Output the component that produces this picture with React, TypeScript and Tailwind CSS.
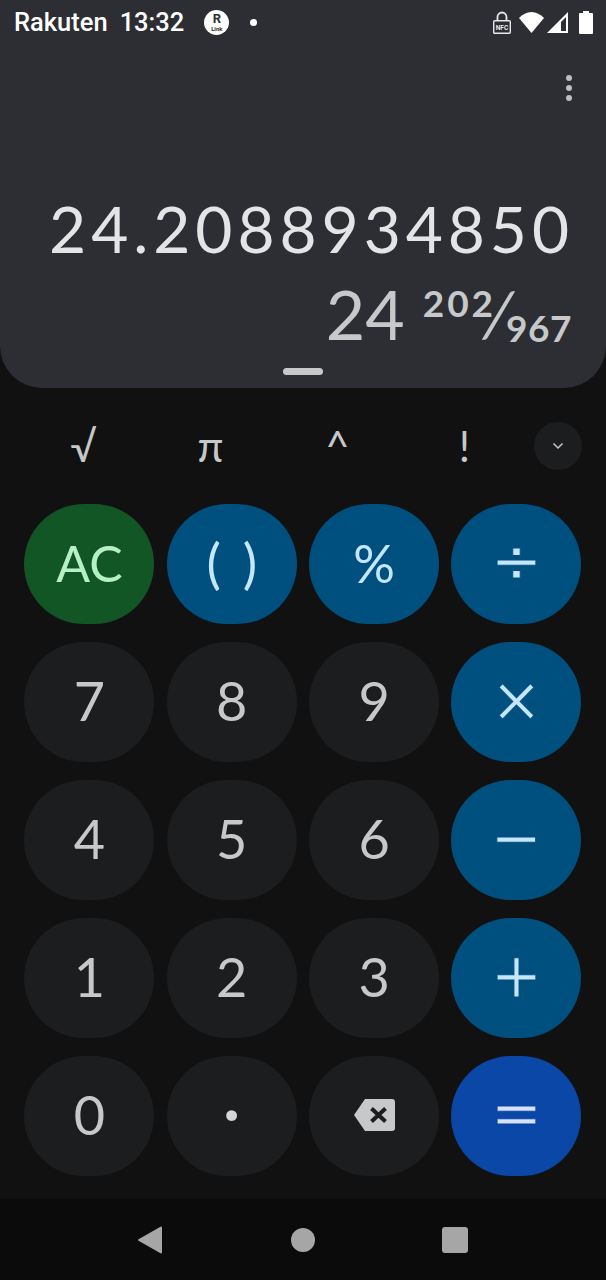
import type { ReactNode } from "react";

const SCI_KEYS = ["√", "π", "^", "!"];

const NUM = "bg-[#1c1d1f] pb-[2px] text-[#c6c8c9] text-[54px]";
const BLUE = "bg-[#00507f] text-[#c4e7ff]";
const OP = `${BLUE} pb-[4px] font-['DejaVu_Sans',sans-serif] text-[62px] [-webkit-text-stroke:1px_#00507f]`;

function Key({ className, children }: { className: string; children: ReactNode }) {
  return (
    <div className={`flex h-[120px] items-center justify-center rounded-full leading-none ${className}`}>
      {children}
    </div>
  );
}

function StatusIcons() {
  return (
    <div className="flex items-center">
      <svg width="18" height="23" viewBox="0 0 18 23" className="mr-[8px]">
        <path d="M4.500 10V6a4.500 4.500 0 0 1 9 0v4" fill="none" stroke="#e8e8e8" strokeWidth="1.800" />
        <rect x="0.700" y="9.700" width="16.600" height="12.600" rx="1" fill="#2d2e33" stroke="#e8e8e8" strokeWidth="1.400" />
        <text x="9" y="18.500" textAnchor="middle" fontSize="6.500" fontWeight="700" fill="#e8e8e8" fontFamily="Roboto">NFC</text>
      </svg>
      <svg width="25" height="21" viewBox="0 0 25 21" className="mr-[3px]">
        <path d="M0 6C3.500 2.500 7.800 0 12.500 0S21.500 2.500 25 6L12.500 21z" fill="#fff" />
      </svg>
      <svg width="21" height="21" viewBox="0 0 21 21" className="mr-[11px]">
        <path d="M21 0v21H0z" fill="#fff" />
        <path d="M19 5v14h-5V10z" fill="#2d2e33" />
      </svg>
      <svg width="14" height="23" viewBox="0 0 14 23">
        <path d="M4 0h6v2h3a1 1 0 0 1 1 1v19a1 1 0 0 1-1 1H1a1 1 0 0 1-1-1V3a1 1 0 0 1 1-1h3z" fill="#fff" />
      </svg>
    </div>
  );
}

export default function App() {
  return (
    <div className="flex h-[1280px] w-[606px] flex-col overflow-hidden bg-[#111112] font-['Lato',sans-serif]">
      <div className="flex h-[388px] flex-none flex-col rounded-b-[42px] bg-[#2d2e33]">
        <div className="flex h-[44px] flex-none items-center justify-between pr-[13px] pl-[14px] font-['Roboto',sans-serif] text-[25.500px] font-medium text-white">
          <div className="flex items-center">
            <span>Rakuten</span>
            <span className="ml-[12px]">13:32</span>
            <div className="ml-[20px] flex h-[25px] w-[25px] flex-col items-center justify-center rounded-full bg-white text-[#2d2e33]">
              <span className="text-[13px] leading-[12px] font-bold">R</span>
              <span className="text-[6px] leading-[7px] font-bold">Link</span>
            </div>
            <div className="ml-[21px] h-[7px] w-[7px] rounded-full bg-white" />
          </div>
          <StatusIcons />
        </div>

        <div className="mt-[31px] mr-[34px] flex flex-none flex-col items-end gap-[4px] self-end">
          <div className="h-[6px] w-[6px] rounded-full bg-[#bdbec0]" />
          <div className="h-[6px] w-[6px] rounded-full bg-[#bdbec0]" />
          <div className="h-[6px] w-[6px] rounded-full bg-[#bdbec0]" />
        </div>

        <div className="mt-[92px] pr-[32px] text-right text-[64px] leading-[72px] tracking-[4.950px] text-[#e3e4e5]">
          24.2088934850
        </div>

        <div className="mt-[13px] flex h-[72px] items-start justify-end pr-[34px] text-[#c6c8c9]">
          <span className="text-[68px] leading-[72px] tracking-[0px]">24</span>
          <span className="mt-[6px] ml-[18px] text-[37px] leading-[37px] font-bold tracking-[3px]">202</span>
          <span className="mt-[4px] mr-[-7px] ml-[-11px] -skew-x-[11deg] text-[62px] leading-[62px]">/</span>
          <span className="mt-[31px] text-[37px] leading-[37px] font-bold tracking-[0.500px]">967</span>
        </div>

        <div className="mx-auto mt-[18px] h-[7px] w-[40px] rounded-full bg-[#c6c8c9]" />
      </div>

      <div className="flex h-[116px] flex-none items-center pr-[24px] pl-[20px] text-[#c6c8c9]">
        <div className="flex text-center text-[42px] leading-none">
          {SCI_KEYS.map((key) => (
            <span key={key} className="w-[127px]">
              {key}
            </span>
          ))}
        </div>
        <div className="ml-auto flex h-[48px] w-[48px] flex-none items-center justify-center rounded-full bg-[#1c1d1f]">
          <svg width="12" height="8" viewBox="0 0 12 8" fill="none" stroke="#c6c8c9" strokeWidth="1.500">
            <path d="M1.500 1.500 6 6l4.500-4.500" />
          </svg>
        </div>
      </div>

      <div className="grid flex-none grid-cols-4 gap-x-[12.300px] gap-y-[18px] pr-[24.600px] pl-[24.400px]">
        <Key className="bg-[#135625] pb-[2px] text-[50px] text-[#b6f0c4]">AC</Key>
        <Key className={`${BLUE} pb-[2px] text-[54px] [word-spacing:8px]`}>( )</Key>
        <Key className={`${BLUE} pb-[2px] text-[52px]`}>%</Key>
        <Key className={OP}>÷</Key>
        <Key className={NUM}>7</Key>
        <Key className={NUM}>8</Key>
        <Key className={NUM}>9</Key>
        <Key className={OP}>×</Key>
        <Key className={NUM}>4</Key>
        <Key className={NUM}>5</Key>
        <Key className={NUM}>6</Key>
        <Key className={OP}>−</Key>
        <Key className={NUM}>1</Key>
        <Key className={NUM}>2</Key>
        <Key className={NUM}>3</Key>
        <Key className={OP}>+</Key>
        <Key className={NUM}>0</Key>
        <Key className="bg-[#1c1d1f] pb-[14px] text-[72px] text-[#d4d5d6]">·</Key>
        <Key className={NUM}>
          <svg width="41" height="32" viewBox="0 0 41 32">
            <path d="M11 0h27a3 3 0 0 1 3 3v26a3 3 0 0 1-3 3H11L0 16z" fill="#c6c8c9" />
            <path d="M17.500 9.500 31.500 22.500M31.500 9.500 17.500 22.500" stroke="#1c1d1f" strokeWidth="4" />
          </svg>
        </Key>
        <Key className="bg-[#0a47a6] pb-[4px] font-['DejaVu_Sans',sans-serif] text-[62px] text-[#d8e2ff] [-webkit-text-stroke:1px_#0a47a6]">=</Key>
      </div>

      <div className="mt-[23px] flex flex-1 items-center justify-center bg-[#0b0b0b]">
        <div className="flex items-center pr-[2px]">
          <svg width="26" height="28" viewBox="0 0 26 28" className="mr-[128px]">
            <path d="M24 1.500v25L2 14z" fill="#a6a6a6" stroke="#a6a6a6" strokeWidth="2" strokeLinejoin="round" />
          </svg>
          <div className="mr-[127px] h-[24px] w-[24px] rounded-full bg-[#a6a6a6]" />
          <div className="h-[26px] w-[26px] rounded-[3px] bg-[#a6a6a6]" />
        </div>
      </div>
    </div>
  );
}
